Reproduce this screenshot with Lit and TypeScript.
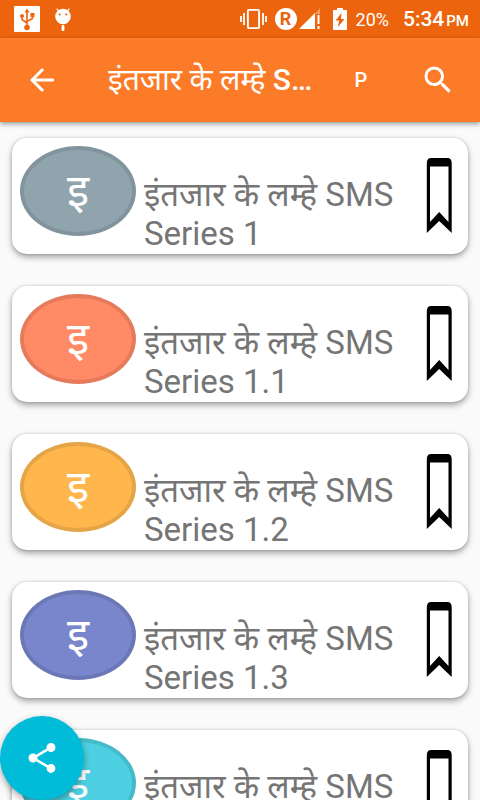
import { LitElement, html, css } from "lit";
import { customElement, property } from "lit/decorators.js";
import { styleMap } from "lit/directives/style-map.js";

interface Series {
  title: string;
  color: string;
}

const SERIES: Series[] = [
  { title: "इंतजार के लम्हे SMS Series 1", color: "#90a4ae" },
  { title: "इंतजार के लम्हे SMS Series 1.1", color: "#ff8a65" },
  { title: "इंतजार के लम्हे SMS Series 1.2", color: "#ffb74d" },
  { title: "इंतजार के लम्हे SMS Series 1.3", color: "#7986cb" },
  { title: "इंतजार के लम्हे SMS Series 1.4", color: "#4dd0e1" },
];

@customElement("status-bar")
export class StatusBar extends LitElement {
  static styles = css`
    :host {
      display: flex;
      align-items: center;
      height: 38px;
      padding: 0 11px 0 14px;
      background: #ec640d;
      color: #fff;
    }
    svg {
      display: block;
      flex: none;
    }
    .droid {
      margin-left: 12px;
    }
    .right {
      display: flex;
      align-items: center;
      margin-left: auto;
    }
    .registered {
      margin-left: 8px;
    }
    .roaming {
      display: flex;
      align-items: center;
      justify-content: center;
      width: 22px;
      height: 22px;
      margin-left: 8px;
      border-radius: 50%;
      background: #fff;
      color: #ec640d;
      font-size: 18px;
      font-weight: 700;
      line-height: 22px;
    }
    .signal {
      margin-left: 2px;
    }
    .battery {
      margin-left: 12px;
    }
    .percent {
      margin-left: 9px;
      font-size: 18px;
      line-height: 38px;
      padding-top: 2px;
    }
    .clock {
      margin-left: 14px;
      font-size: 21px;
      font-weight: 500;
      line-height: 38px;
      padding-top: 2px;
    }
    .meridiem {
      font-size: 15px;
      margin-left: 2px;
    }
  `;

  render() {
    return html`
      <svg width="26" height="26" viewBox="0 0 26 26" aria-label="USB connected">
        <rect width="26" height="26" rx="1" fill="#fff" />
        <g fill="none" stroke="#ec640d" stroke-width="1.6">
          <path d="M13 21V5M8 10v3.500l5 3.500M18.500 9v3.500L13 15.500" />
        </g>
        <g fill="#ec640d">
          <path d="M13 2.500l2.500 4h-5z" />
          <circle cx="13" cy="21.500" r="2.800" />
          <circle cx="8" cy="10" r="2" />
          <rect x="16.500" y="7" width="4" height="4" />
        </g>
      </svg>
      <svg class="droid" width="22" height="26" viewBox="0 0 22 26" aria-label="Debugging">
        <g fill="none" stroke="#fff" stroke-width="1.300" stroke-linecap="round">
          <path d="M5 3l2 3M17 3l-2 3" />
        </g>
        <circle cx="11" cy="10.500" r="7.800" fill="#fff" />
        <rect x="9.600" y="19" width="2.800" height="6" rx="1" fill="#fff" />
        <circle cx="7.800" cy="8.500" r="1.100" fill="#ec640d" />
        <circle cx="14.200" cy="8.500" r="1.100" fill="#ec640d" />
      </svg>
      <div class="right">
        <svg width="27" height="22" viewBox="0 0 27 22" aria-label="Vibrate">
          <rect x="7.900" y="1.900" width="11.200" height="18.200" rx="1" fill="none" stroke="#fff" stroke-width="1.900" />
          <path d="M1 8v6M4 5v12M23 5v12M26 8v6" fill="none" stroke="#fff" stroke-width="1.800" />
        </svg>
        <span class="roaming">R</span>
        <svg class="signal" width="22" height="22" viewBox="0 0 22 22" aria-label="Signal">
          <path d="M21 0v6h-5z" fill="#fff" opacity=".35" />
          <path d="M0 21L16 5v16z" fill="#fff" />
          <path d="M19.500 7v9M19.500 18v3" stroke="#fff" stroke-width="2" />
        </svg>
        <svg class="battery" width="14" height="22" viewBox="0 0 14 22" aria-label="Charging">
          <path d="M0 2h4V0h6v2h4v20H0z" fill="#fff" />
          <path d="M8.500 5L2.500 12.500h3.500L5 19l6.500-8H8z" fill="#ec640d" />
        </svg>
        <span class="percent">20%</span>
        <span class="clock">5:34<span class="meridiem">PM</span></span>
      </div>
    `;
  }
}

@customElement("app-bar")
export class AppBar extends LitElement {
  static styles = css`
    :host {
      display: flex;
      align-items: center;
      height: 84px;
      padding: 0 12px;
      background: #fc7b29;
      color: #fff;
      box-shadow: 0 2px 5px rgba(0, 0, 0, 0.4);
      position: relative;
    }
    button {
      display: flex;
      align-items: center;
      justify-content: center;
      flex: none;
      width: 60px;
      height: 60px;
      padding: 0;
      border: 0;
      background: none;
      color: inherit;
      font: inherit;
      font-size: 20px;
      font-weight: 500;
    }
    h1 {
      flex: 1;
      min-width: 0;
      margin: 0 16px 0 36px;
      font-size: 30px;
      font-weight: 500;
      line-height: 44px;
      white-space: nowrap;
      overflow: hidden;
      text-overflow: ellipsis;
    }
    .hindi {
      font-weight: 400;
    }
    .search {
      margin-left: 17px;
    }
  `;

  render() {
    return html`
      <button aria-label="Back">
        <svg width="36" height="36" viewBox="0 0 24 24" fill="#fff">
          <path d="M20 11H7.830l5.590-5.590L12 4l-8 8 8 8 1.410-1.410L7.830 13H20v-2z" />
        </svg>
      </button>
      <h1><span class="hindi">इंतजार के लम्हे</span> SMS</h1>
      <button>P</button>
      <button class="search" aria-label="Search">
        <svg width="36" height="36" viewBox="0 0 24 24" fill="#fff">
          <path
            d="M15.500 14h-.79l-.28-.27A6.471 6.471 0 0 0 16 9.500 6.500 6.500 0 1 0 9.500 16c1.610 0 3.090-.59 4.230-1.570l.27.28v.79l5 4.990L20.490 19l-4.990-5zm-6 0C7.010 14 5 11.990 5 9.500S7.010 5 9.500 5 14 7.010 14 9.500 11.990 14 9.500 14z"
          />
        </svg>
      </button>
    `;
  }
}

@customElement("series-card")
export class SeriesCard extends LitElement {
  @property() heading = "";
  @property() color = "";

  static styles = css`
    :host {
      display: flex;
      align-items: flex-start;
      gap: 8px;
      padding: 8px 15px 1px 8px;
      border-radius: 15px;
      background: #fff;
      box-shadow: 0 3px 6px rgba(0, 0, 0, 0.36), 0 0 3px rgba(0, 0, 0, 0.14);
    }
    .avatar {
      display: flex;
      align-items: center;
      justify-content: center;
      flex: none;
      box-sizing: border-box;
      width: 116px;
      height: 90px;
      border: 4px solid rgba(0, 0, 0, 0.1);
      border-radius: 50%;
      color: #fff;
      font-size: 45px;
      line-height: 60px;
    }
    h2 {
      flex: 1;
      min-width: 0;
      margin: 0;
      padding-top: 29px;
      color: #757575;
      font-size: 33px;
      font-weight: 400;
      line-height: 39px;
    }
    button {
      flex: none;
      margin-top: 12px;
      padding: 0;
      border: 0;
      background: none;
    }
    svg {
      display: block;
    }
  `;

  render() {
    return html`
      <div class="avatar" style=${styleMap({ backgroundColor: this.color })}>इ</div>
      <h2>${this.heading}</h2>
      <button aria-label="Bookmark">
        <svg width="27" height="75" viewBox="0 0 27 75">
          <path
            fill-rule="evenodd"
            d="M.8 5Q1 0 5 0H21.500Q25.500 0 25.700 5V75L13.200 63 .8 75zM4 8.500V64L13.200 54 22.500 64V8.500z"
          />
        </svg>
      </button>
    `;
  }
}

@customElement("app-root")
export class AppRoot extends LitElement {
  static styles = css`
    :host {
      display: flex;
      flex-direction: column;
      position: relative;
      height: 100vh;
      overflow: hidden;
      background: #fafafa;
      font-family: Roboto, "Noto Sans", sans-serif;
    }
    status-bar,
    app-bar {
      flex: none;
    }
    main {
      display: flex;
      flex-direction: column;
      flex: 1;
      gap: 32px;
      min-height: 0;
      padding: 16px 12px;
      overflow: hidden;
    }
    series-card {
      flex: none;
    }
    .share {
      position: absolute;
      left: 0;
      bottom: 0;
      display: flex;
      align-items: center;
      justify-content: center;
      width: 84px;
      height: 84px;
      padding: 0;
      border: 0;
      border-radius: 50%;
      background: #00bcd8;
      box-shadow: 0 3px 7px rgba(0, 0, 0, 0.35);
    }
  `;

  render() {
    return html`
      <status-bar></status-bar>
      <app-bar></app-bar>
      <main>
        ${SERIES.map((s) => html`<series-card .heading=${s.title} .color=${s.color}></series-card>`)}
      </main>
      <button class="share" aria-label="Share">
        <svg width="36" height="36" viewBox="0 0 24 24" fill="#fff">
          <path
            d="M18 16.080c-.76 0-1.440.3-1.960.77L8.910 12.700c.05-.23.09-.46.09-.7s-.04-.47-.09-.7l7.050-4.110c.54.5 1.250.81 2.040.81 1.660 0 3-1.340 3-3s-1.340-3-3-3-3 1.340-3 3c0 .24.04.47.09.7L8.040 9.810C7.500 9.310 6.790 9 6 9c-1.660 0-3 1.340-3 3s1.340 3 3 3c.79 0 1.500-.31 2.040-.81l7.120 4.160c-.05.21-.08.43-.08.65 0 1.610 1.310 2.920 2.920 2.920s2.920-1.310 2.920-2.920-1.310-2.920-2.920-2.920z"
          />
        </svg>
      </button>
    `;
  }
}
